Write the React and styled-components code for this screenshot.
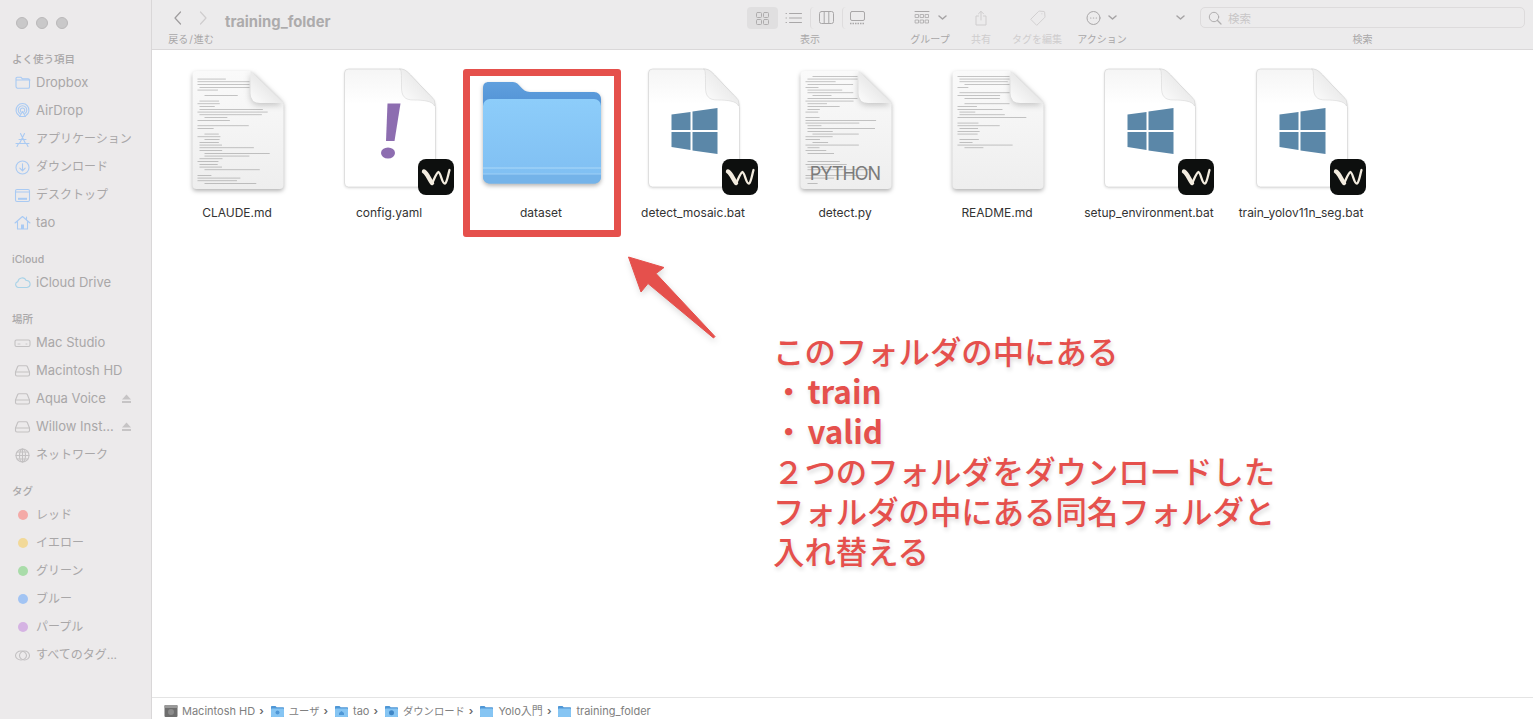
import React from 'react'
import styled, { createGlobalStyle } from 'styled-components'

const GlobalStyle = createGlobalStyle`
  html, body {
    margin: 0;
    height: 100%;
    overflow: hidden;
    background: #fff;
    font-family: Inter, "Noto Sans CJK JP", sans-serif;
  }
`

const favorites = [
  ['folder', 'Dropbox'],
  ['airdrop', 'AirDrop'],
  ['apps', 'アプリケーション'],
  ['download', 'ダウンロード'],
  ['desktop', 'デスクトップ'],
  ['home', 'tao'],
]
const places = [
  ['mini', 'Mac Studio'],
  ['drive', 'Macintosh HD'],
  ['drive', 'Aqua Voice', true],
  ['drive', 'Willow Inst...', true],
  ['globe', 'ネットワーク'],
]
const tags = [
  ['#f4aaa7', 'レッド'],
  ['#f2d998', 'イエロー'],
  ['#a9dca9', 'グリーン'],
  ['#a2c4f3', 'ブルー'],
  ['#d5b3e3', 'パープル'],
]
const files = [
  { name: 'CLAUDE.md', kind: 'text', seed: 7, rows: 40 },
  { name: 'config.yaml', kind: 'yaml' },
  { name: 'dataset', kind: 'folder' },
  { name: 'detect_mosaic.bat', kind: 'bat' },
  { name: 'detect.py', kind: 'python', seed: 23, rows: 40 },
  { name: 'README.md', kind: 'text', seed: 41, rows: 27 },
  { name: 'setup_environment.bat', kind: 'bat' },
  { name: 'train_yolov11n_seg.bat', kind: 'bat' },
]
const crumbs = [
  ['drive', 'Macintosh HD'],
  ['user', 'ユーザ'],
  ['home', 'tao'],
  ['down', 'ダウンロード'],
  ['plain', 'Yolo入門'],
  ['plain', 'training_folder'],
]

// japanese labels are set a bit smaller than the latin ones in the finder
const isKana = text => /^[^\x00-\x7f]/.test(text)

function SideIcon({ name }) {
  const common = { fill: 'none', stroke: 'currentColor', strokeWidth: 1.1, strokeLinecap: 'round', strokeLinejoin: 'round' }
  return (
    <svg width="17" height="17" viewBox="0 0 17 17" {...common}>
      {name === 'folder' && <path d="M2 4.500c0-.8.5-1.300 1.300-1.300h3.500l1.400 1.500h6c.8 0 1.300.5 1.300 1.300v7c0 .8-.5 1.300-1.300 1.300H3.300C2.500 13.800 2 13.300 2 12.500zM2 6h14" />}
      {name === 'airdrop' && (
        <>
          <path d="M5 13.500a6.500 6.500 0 1 1 7 0" />
          <path d="M6 11.500a4.300 4.300 0 1 1 5 0" />
          <path d="M7 9.800a2.200 2.200 0 1 1 3 0" />
          <path d="M8.500 9.500l3 5h-6z" />
        </>
      )}
      {name === 'apps' && <path d="M6.500 2.500l5 10M10.500 2.500l-5 10M2 12.500h13M3 15.500l1.500-3M14 15.500l-1.500-3M5 8.500h7" />}
      {name === 'download' && (
        <>
          <circle cx="8.500" cy="8.500" r="6.500" />
          <path d="M8.500 4.800v7M5.800 9.200l2.700 2.700 2.700-2.700" />
        </>
      )}
      {name === 'desktop' && (
        <>
          <rect x="1.500" y="2.500" width="14" height="12" rx="1.500" />
          <path d="M1.500 5h14" />
          <path d="M4 11.800h9" strokeWidth="2" strokeLinecap="butt" />
        </>
      )}
      {name === 'home' && (
        <>
          <path d="M1 9l7.500-6.500L16 9M3.500 7.500v7.500h10V7.500M12.500 3v2.500" />
          <rect x="7" y="10.500" width="3" height="4.500" fill="currentColor" stroke="none" />
        </>
      )}
      {name === 'cloud' && <path d="M4.500 13.500a3 3 0 0 1-.6-5.900 4.300 4.300 0 0 1 8.200-1.100 3.500 3.500 0 0 1 .9 7z" />}
      {name === 'mini' && (
        <>
          <rect x="1" y="6" width="15" height="6.500" rx="1.500" />
          <path d="M4 10h2M12 10h1" strokeWidth=".8" />
        </>
      )}
      {name === 'drive' && (
        <>
          <path d="M1.500 10l2.200-5.500c.2-.5.600-.8 1.200-.8h7.200c.6 0 1 .3 1.200.8l2.200 5.500v2.500c0 1-.6 1.500-1.500 1.500H3c-.9 0-1.500-.5-1.500-1.500z" />
          <path d="M1.500 10h14" />
        </>
      )}
      {name === 'globe' && (
        <>
          <circle cx="8.500" cy="8.500" r="6.500" />
          <ellipse cx="8.500" cy="8.500" rx="3" ry="6.500" />
          <path d="M2 8.500h13M3 5h11M3 12h11M8.500 2v13" />
        </>
      )}
      {name === 'alltags' && (
        <>
          <ellipse cx="7" cy="8.500" rx="5.500" ry="4.500" />
          <ellipse cx="10.500" cy="8.500" rx="5" ry="4.500" />
        </>
      )}
    </svg>
  )
}

function EjectIcon() {
  return (
    <svg width="11" height="11" viewBox="0 0 11 11" fill="currentColor">
      <path d="M5.500 1.500L10 6.500H1z" />
      <rect x="1" y="8" width="9" height="2" />
    </svg>
  )
}

function Sidebar() {
  return (
    <Side>
      <Lights>
        <Light />
        <Light />
        <Light />
      </Lights>
      <SectionTitle $first>よく使う項目</SectionTitle>
      {favorites.map(([icon, label]) => (
        <Row key={label} $kana={isKana(label)}>
          <RowIcon>
            <SideIcon name={icon} />
          </RowIcon>
          {label}
        </Row>
      ))}
      <SectionTitle>iCloud</SectionTitle>
      <Row>
        <RowIcon $tone="#a9d3e8">
          <SideIcon name="cloud" />
        </RowIcon>
        iCloud Drive
      </Row>
      <SectionTitle>場所</SectionTitle>
      {places.map(([icon, label, eject]) => (
        <Row key={label} $kana={isKana(label)}>
          <RowIcon $tone="#c3c1c2">
            <SideIcon name={icon} />
          </RowIcon>
          {label}
          {eject && (
            <Eject>
              <EjectIcon />
            </Eject>
          )}
        </Row>
      ))}
      <SectionTitle>タグ</SectionTitle>
      {tags.map(([color, label]) => (
        <Row key={label} $kana>
          <RowIcon>
            <TagDot $color={color} />
          </RowIcon>
          {label}
        </Row>
      ))}
      <Row $kana>
        <RowIcon $tone="#c3c1c2">
          <SideIcon name="alltags" />
        </RowIcon>
        すべてのタグ...
      </Row>
    </Side>
  )
}

function ToolIcon({ name, w = 22, h = 16, tone }) {
  return (
    <svg width={w} height={h} viewBox={`0 0 ${w} ${h}`} fill="none" stroke={tone || '#a9a7a8'} strokeWidth="1" strokeLinecap="round" strokeLinejoin="round">
      {name === 'grid' && (
        <>
          <rect x="5.500" y="2.500" width="5" height="5" rx="1" />
          <rect x="12.500" y="2.500" width="5" height="5" rx="1" />
          <rect x="5.500" y="9.500" width="5" height="5" rx="1" />
          <rect x="12.500" y="9.500" width="5" height="5" rx="1" />
        </>
      )}
      {name === 'list' && <path d="M3 3.500h.5M3 8h.5M3 12.500h.5M6.500 3.500h12M6.500 8h12M6.500 12.500h12" />}
      {name === 'columns' && (
        <>
          <rect x="2.500" y="1.500" width="14" height="12" rx="2" />
          <path d="M7.200 1.500v12M11.800 1.500v12" />
        </>
      )}
      {name === 'gallery' && (
        <>
          <rect x="3.500" y="1.500" width="14" height="9" rx="1.500" />
          <path d="M3 13.500h15" strokeDasharray="1.500 1" strokeWidth="1.500" strokeLinecap="butt" />
        </>
      )}
      {name === 'group' && (
        <>
          <path d="M2 1.500h14" />
          <path d="M2.500 4.500h3v3h-3zM7.500 4.500h3v3h-3zM12.500 4.500h3v3h-3zM2.500 10h3v3h-3zM7.500 10h3v3h-3zM12.500 10h3v3h-3z" strokeWidth=".8" />
        </>
      )}
      {name === 'share' && <path d="M8 10V1.500M5.500 3.800L8 1.300l2.500 2.500M5.500 6H3v9h10V6h-2.500" />}
      {name === 'tag' && <path d="M2 9l7.500-7.500c.3-.3.600-.4 1-.4l4.400.4c.4 0 .7.300.7.700l.4 4.400c0 .4-.1.700-.4 1L8 15.100zM12.800 3.800h.2" />}
      {name === 'action' && (
        <>
          <circle cx="7.500" cy="8" r="6.500" />
          <path d="M4.600 8h.3M7.400 8h.3M10.200 8h.3" strokeWidth="1.200" />
        </>
      )}
      {name === 'chevron' && <path d="M2 2l3.500 3L9 2" strokeWidth="1.500" />}
      {name === 'back' && <path d="M7.500 2L2 8l5.500 6" strokeWidth="1.200" />}
      {name === 'forward' && <path d="M2.500 2L8 8l-5.500 6" strokeWidth="1.200" />}
      {name === 'search' && (
        <>
          <circle cx="6" cy="6" r="4.700" />
          <path d="M9.500 9.500l3.500 3.500" strokeWidth="1.200" />
        </>
      )}
    </svg>
  )
}

function Toolbar() {
  return (
    <Bar>
      <ToolItem $width="48px">
        <NavRow>
          <ToolIcon name="back" w={10} tone="#9e9c9d" />
          <ToolIcon name="forward" w={10} tone="#cfcdce" />
        </NavRow>
        <ToolLabel>戻る{'\u200a'}/{'\u200a'}進む</ToolLabel>
      </ToolItem>
      <Title>training_folder</Title>
      <ToolItem $width="126px">
        <IconRow>
          <ViewButton $width="31px" $active>
            <ToolIcon name="grid" w={23} tone="#aeacad" />
          </ViewButton>
          <ViewButton $width="32px">
            <ToolIcon name="list" />
          </ViewButton>
          <ViewButton $width="32px" $split>
            <ToolIcon name="columns" w={19} />
          </ViewButton>
          <ViewButton $width="31px" $split>
            <ToolIcon name="gallery" />
          </ViewButton>
        </IconRow>
        <ToolLabel>表示</ToolLabel>
      </ToolItem>
      <ToolItem $width="60px" $ml="27px">
        <IconRow>
          <ToolIcon name="group" w={18} />
          <ChevronGap>
            <ToolIcon name="chevron" w={11} h={8} tone="#a5a3a4" />
          </ChevronGap>
        </IconRow>
        <ToolLabel>グループ</ToolLabel>
      </ToolItem>
      <ToolItem $width="30px" $ml="6px">
        <IconRow>
          <ToolIcon name="share" w={16} tone="#cfcdce" />
        </IconRow>
        <ToolLabel $muted>共有</ToolLabel>
      </ToolItem>
      <ToolItem $width="60px" $ml="11px">
        <IconRow>
          <ToolIcon name="tag" w={17} tone="#d2d0d1" />
        </IconRow>
        <ToolLabel $muted>タグを編集</ToolLabel>
      </ToolItem>
      <ToolItem $width="62px" $ml="4px">
        <IconRow>
          <ToolIcon name="action" w={15} />
          <ChevronGap>
            <ToolIcon name="chevron" w={11} h={8} tone="#a5a3a4" />
          </ChevronGap>
        </IconRow>
        <ToolLabel>アクション</ToolLabel>
      </ToolItem>
      <ToolItem $width="20px" $ml="37px">
        <IconRow>
          <ToolIcon name="chevron" w={11} h={8} tone="#a5a3a4" />
        </IconRow>
      </ToolItem>
      <ToolItem $width="325px" $ml="10px">
        <IconRow>
          <SearchBox>
            <ToolIcon name="search" w={14} h={14} tone="#b0aeaf" />
            検索
          </SearchBox>
        </IconRow>
        <ToolLabel>検索</ToolLabel>
      </ToolItem>
    </Bar>
  )
}

// little pseudo-random text lines for the quick look thumbnails
function makeLines(seed, rows) {
  const lines = []
  let s = seed
  const next = () => {
    s = (s * 137 + 59) % 1009
    return s / 1009
  }
  for (let i = 0; i < rows; i++) {
    if (next() < 0.16) continue
    const y = 5 + i * 2.75
    const indent = next() < 0.35 ? 7 : next() < 0.3 ? 12 : 5
    const width = next() < 0.3 ? 10 + next() * 14 : 18 + next() * 58
    const limit = y < 33 ? 57 : 87
    lines.push({ y, x: indent, width: Math.min(width, limit - indent) })
  }
  return lines
}

function TextDoc({ seed, rows }) {
  const lines = makeLines(seed, rows)
  return (
    <DocSvg width="130" height="130" viewBox="0 0 130 130">
      <defs>
        <linearGradient id="pageFill" x1="0" y1="0" x2="0" y2="1">
          <stop offset="0" stopColor="#fafafa" />
          <stop offset="1" stopColor="#eeeeee" />
        </linearGradient>
        <linearGradient id="flapFill" x1="0" y1="1" x2="1" y2="0">
          <stop offset="0" stopColor="#fdfdfd" />
          <stop offset="1" stopColor="#d6d6d6" />
        </linearGradient>
      </defs>
      <g transform="translate(20.500 5)">
        <path d="M4 0H58L91 33V114Q91 118 87 118H4Q0 118 0 114V4Q0 0 4 0Z" fill="url(#pageFill)" />
        {lines.map((l, i) => (
          <rect key={i} x={l.x} y={l.y} width={l.width} height=".6" fill="#4c4c4c" opacity=".5" />
        ))}
        <Flap d="M58 0V22Q58 32 68 32H91Z" fill="url(#flapFill)" />
      </g>
    </DocSvg>
  )
}

function BlankDoc({ children }) {
  return (
    <BlankSvg width="130" height="130" viewBox="0 0 130 130">
      <defs>
        <linearGradient id="blankFill" x1="0" y1="0" x2="0" y2="1">
          <stop offset="0" stopColor="#f5f5f5" />
          <stop offset=".3" stopColor="#fff" />
        </linearGradient>
        <linearGradient id="blankFlap" x1="0" y1="1" x2="1" y2="0">
          <stop offset="0" stopColor="#fff" />
          <stop offset="1" stopColor="#dedede" />
        </linearGradient>
      </defs>
      <g transform="translate(20.500 3)">
        <path d="M4 0H54C60 0 62 2 66 6L85 26C89 30 91 34 91 40V114Q91 118 87 118H4Q0 118 0 114V4Q0 0 4 0Z" fill="url(#blankFill)" stroke="#d4d4d4" strokeWidth=".7" />
        <path d="M55 0C57 0 57 5 57 18C57 27 60 31 69 31C79 31 88 32 90 37C91 30 89 30 85 26L66 6C62 2 60 0 55 0Z" fill="url(#blankFlap)" stroke="#d0d0d0" strokeWidth=".5" />
        {children}
      </g>
    </BlankSvg>
  )
}

function WindowsMark() {
  return (
    <g fill="#5b87a8">
      <path d="M23 45.500L42 43V61H23Z" />
      <path d="M44 42.500L69 39V61H44Z" />
      <path d="M23 63H42V81L23 78Z" />
      <path d="M44 63H69V85L44 81.500Z" />
    </g>
  )
}

function ExclamationMark() {
  return (
    <g fill="#8d6db0">
      <path d="M43 34.500H56L50 72H41.500Z" />
      <ellipse cx="43.500" cy="84" rx="7" ry="5.500" />
    </g>
  )
}

function AppBadge() {
  return (
    <Badge>
      <svg width="36" height="36" viewBox="0 0 36 36" fill="none" stroke="#f3ecdf" strokeLinecap="round" strokeLinejoin="round">
        <path d="M6 12.500C9 14 11 20 14 24" strokeWidth="4.400" />
        <path d="M14 24.500C16 21 18 14 20.500 13C23 14 24 25 27 24.500C29 23.500 30 16 31.500 11" strokeWidth="2.300" />
      </svg>
    </Badge>
  )
}

function FolderIcon() {
  return (
    <DocSvg width="130" height="130" viewBox="0 0 130 130">
      <defs>
        <linearGradient id="folderBack" x1="0" y1="0" x2="0" y2="1">
          <stop offset="0" stopColor="#609fdd" />
          <stop offset="1" stopColor="#4a8cd2" />
        </linearGradient>
        <linearGradient id="folderFront" x1="0" y1="0" x2="0" y2="1">
          <stop offset="0" stopColor="#8dcdfa" />
          <stop offset="1" stopColor="#7fbef2" />
        </linearGradient>
      </defs>
      <g transform="translate(7 16)">
        <path d="M6 0H30C37 0 38 10 47 10H111C115 10 118 13 118 17V40H0V6C0 2 2 0 6 0Z" fill="url(#folderBack)" />
        <rect x="0" y="17" width="118" height="84.500" rx="7" fill="url(#folderFront)" />
        <path d="M0 86H118" stroke="#9ed0f7" strokeWidth="1.500" />
        <path d="M0 92H118V95C118 99 115 101.500 111 101.500H7C3 101.500 0 99 0 95Z" fill="#74b3e9" />
        <path d="M0 92H118" stroke="#9ed0f7" strokeWidth="1" />
      </g>
    </DocSvg>
  )
}

function FileIcon({ file }) {
  if (file.kind === 'folder') return <FolderIcon />
  if (file.kind === 'yaml') {
    return (
      <>
        <BlankDoc>
          <ExclamationMark />
        </BlankDoc>
        <AppBadge />
      </>
    )
  }
  if (file.kind === 'bat') {
    return (
      <>
        <BlankDoc>
          <WindowsMark />
        </BlankDoc>
        <AppBadge />
      </>
    )
  }
  return (
    <>
      <TextDoc seed={file.seed} rows={file.rows} />
      {file.kind === 'python' && <PythonTag>PYTHON</PythonTag>}
    </>
  )
}

function Annotation() {
  return (
    <>
      <Highlight />
      <ArrowSvg width="100" height="90" viewBox="0 0 100 90">
        <path
          d="M3.500 3L39 13.500L31 19.500L90 82.500L88.500 84L23 29.500L16 38Z"
          fill="#e5504c"
          stroke="#e5504c"
          strokeWidth="1"
          strokeLinejoin="round"
        />
      </ArrowSvg>
      <Note>
        このフォルダの中にある
        <br />・<NoteWord>train</NoteWord>
        <br />・<NoteWord>valid</NoteWord>
        <br />２つのフォルダをダウンロードした
        <br />
        フォルダの中にある同名フォルダと
        <br />
        入れ替える
      </Note>
    </>
  )
}

function CrumbIcon({ name }) {
  if (name === 'drive') {
    return (
      <svg width="14" height="14" viewBox="0 0 14 14">
        <rect x=".5" y="1" width="13" height="12" rx="1" fill="#6e6e6e" />
        <rect x=".5" y="1" width="13" height="3" rx="1" fill="#9a9a9a" />
        <circle cx="7" cy="8" r="3" fill="#8c8c8c" />
      </svg>
    )
  }
  return (
    <svg width="15" height="14" viewBox="0 0 15 14">
      <path d="M1 3c0-.7.4-1 1-1h3.500l1.200 1.200H13c.7 0 1 .4 1 1V12c0 .6-.3 1-1 1H2c-.6 0-1-.4-1-1z" fill="#4f97d6" />
      <rect x="1" y="4.500" width="13" height="8.500" rx="1" fill="#86c5f3" />
      {name === 'user' && <circle cx="7.500" cy="8.500" r="2" fill="#4f97d6" />}
      {name === 'home' && <path d="M5 9l2.500-2L10 9v2H5z" fill="#4f97d6" />}
      {name === 'down' && <circle cx="7.500" cy="8.700" r="2.500" fill="#3f86c6" />}
    </svg>
  )
}

function PathBar() {
  return (
    <Path>
      {crumbs.map(([icon, label], i) => (
        <Crumb key={label} $kana={isKana(label)}>
          {i > 0 && <CrumbSep>›</CrumbSep>}
          <CrumbIcon name={icon} />
          {label}
        </Crumb>
      ))}
    </Path>
  )
}

export default function App() {
  return (
    <Window>
      <GlobalStyle />
      <Sidebar />
      <Content>
        <Toolbar />
        <Main>
          {files.map(file => (
            <Cell key={file.name}>
              <IconBox>
                <FileIcon file={file} />
              </IconBox>
              <FileName>{file.name}</FileName>
            </Cell>
          ))}
          <Annotation />
        </Main>
        <PathBar />
      </Content>
    </Window>
  )
}

const Window = styled.div`
  display: flex;
  width: 1533px;
  height: 719px;
  overflow: hidden;
`
const Side = styled.aside`
  flex: 0 0 152px;
  box-sizing: border-box;
  border-right: 1px solid #d9d7d8;
  background: #eceaeb;
  color: #a9a7a8;
`
const Lights = styled.div`
  display: flex;
  gap: 8px;
  padding: 17px 0 0 16px;
  height: 12px;
`
const Light = styled.span`
  box-sizing: border-box;
  width: 12px;
  height: 12px;
  border-radius: 50%;
  background: #c9c8c9;
  border: 1px solid #bab8b9;
`
const SectionTitle = styled.div`
  height: 16px;
  margin: ${props => (props.$first ? '23px' : '16px')} 0 0 12px;
  font-size: 10.5px;
  line-height: 16px;
  font-weight: 500;
  color: #a9a7a8;
`
const Row = styled.div`
  display: flex;
  align-items: center;
  gap: 5px;
  box-sizing: border-box;
  height: 28px;
  padding: ${props => (props.$kana ? '2px' : '0')} 0 0 14px;
  font-size: ${props => (props.$kana ? '12px' : '13px')};
  line-height: 16px;
  color: #a9a7a8;
  white-space: nowrap;
`
const RowIcon = styled.span`
  display: flex;
  align-items: center;
  justify-content: center;
  width: 17px;
  height: 17px;
  color: ${props => props.$tone || '#a9caf3'};
`
const TagDot = styled.span`
  width: 10px;
  height: 10px;
  border-radius: 50%;
  background: ${props => props.$color};
`
const Eject = styled.span`
  display: flex;
  margin-left: auto;
  padding-right: 19px;
  color: #c6c4c5;
`
const Content = styled.div`
  flex: 1;
  display: flex;
  flex-direction: column;
  min-width: 0;
`
const Bar = styled.header`
  display: flex;
  box-sizing: border-box;
  flex: 0 0 50px;
  padding: 3px 8px 0 15px;
  border-bottom: 1px solid #dad8d9;
  background: #ecebec;
`
const ToolItem = styled.div`
  flex: 0 0 ${props => props.$width};
  margin-left: ${props => props.$ml || 0};
  display: flex;
  flex-direction: column;
  align-items: center;
`
const IconRow = styled.div`
  display: flex;
  align-items: center;
  justify-content: center;
  width: 100%;
  height: 29px;
`
const NavRow = styled(IconRow)`
  justify-content: flex-start;
  gap: 15px;
  padding-left: 6px;
  box-sizing: border-box;
`
const ToolLabel = styled.div`
  font-size: 10px;
  line-height: 14px;
  white-space: nowrap;
  color: ${props => (props.$muted ? '#cfcdce' : '#a9a7a8')};
`
const Title = styled.div`
  flex: 1;
  margin-left: 10px;
  font-size: 14.8px;
  font-weight: 700;
  line-height: 38px;
  color: #adabac;
`
const ViewButton = styled.div`
  display: flex;
  align-items: center;
  justify-content: center;
  box-sizing: border-box;
  width: ${props => props.$width};
  height: 22px;
  border-radius: 4px;
  background: ${props => (props.$active ? '#e0dfe0' : 'transparent')};
  border-left: ${props => (props.$split ? '1px solid #dedcdd' : '0')};
`
const ChevronGap = styled.span`
  display: flex;
  margin-left: 6px;
`
const SearchBox = styled.div`
  display: flex;
  align-items: center;
  gap: 6px;
  box-sizing: border-box;
  width: 100%;
  height: 21px;
  padding-left: 7px;
  border: 1px solid #dddbdc;
  border-radius: 5px;
  font-size: 11.5px;
  color: #c8c6c7;
`
const Main = styled.main`
  flex: 1;
  position: relative;
  display: flex;
  align-items: flex-start;
  padding: 16px 0 0 9px;
  background: #fff;
`
const Cell = styled.div`
  flex: 0 0 152px;
  display: flex;
  flex-direction: column;
  align-items: center;
`
const IconBox = styled.div`
  position: relative;
  width: 130px;
  height: 130px;
`
const DocSvg = styled.svg`
  display: block;
  filter: drop-shadow(0 2px 2px rgba(0, 0, 0, 0.3));
`
const BlankSvg = styled.svg`
  display: block;
  filter: drop-shadow(0 1px 1px rgba(0, 0, 0, 0.12));
`
const Flap = styled.path`
  filter: drop-shadow(0 2px 3px rgba(0, 0, 0, 0.22));
`
const Badge = styled.div`
  position: absolute;
  top: 93px;
  right: 0;
  width: 36px;
  height: 36px;
  border-radius: 8px;
  background: #0d0f0e;
`
const PythonTag = styled.span`
  position: absolute;
  top: 95px;
  left: 0;
  width: 130px;
  text-align: center;
  font-size: 18px;
  line-height: 26px;
  letter-spacing: -1px;
  color: #7b7b7b;
`
const FileName = styled.div`
  margin-top: 9px;
  font-size: 12px;
  line-height: 16px;
  color: #333;
  white-space: nowrap;
`
const Highlight = styled.div`
  position: absolute;
  left: 311px;
  top: 19px;
  box-sizing: border-box;
  width: 158px;
  height: 168px;
  border: 7px solid #e5504c;
  border-radius: 3px;
`
const ArrowSvg = styled.svg`
  position: absolute;
  left: 473px;
  top: 204px;
  filter: drop-shadow(1px 3px 3px rgba(0, 0, 0, 0.15));
`
const Note = styled.div`
  position: absolute;
  left: 621px;
  top: 281px;
  font-family: "Noto Sans CJK JP", sans-serif;
  font-size: 31.4px;
  font-weight: 500;
  line-height: 40px;
  color: #e5504c;
  text-shadow: 1px 3px 4px rgba(0, 0, 0, 0.14);
  white-space: nowrap;
`
const NoteWord = styled.span`
  margin-left: 3px;
  font-weight: 700;
`
const Path = styled.footer`
  flex: 0 0 22px;
  box-sizing: border-box;
  display: flex;
  align-items: center;
  padding: 4px 0 0 12px;
  border-top: 1px solid #e4e4e4;
  background: #fff;
  font-size: 11px;
  line-height: 14px;
  color: #808080;
`
const Crumb = styled.span`
  display: flex;
  align-items: center;
  gap: 4px;
  font-size: ${props => (props.$kana ? '10.3px' : '11px')};
`
const CrumbSep = styled.span`
  margin: 0 2px 0 4px;
  font-size: 11px;
  font-weight: 600;
  color: #666;
`
